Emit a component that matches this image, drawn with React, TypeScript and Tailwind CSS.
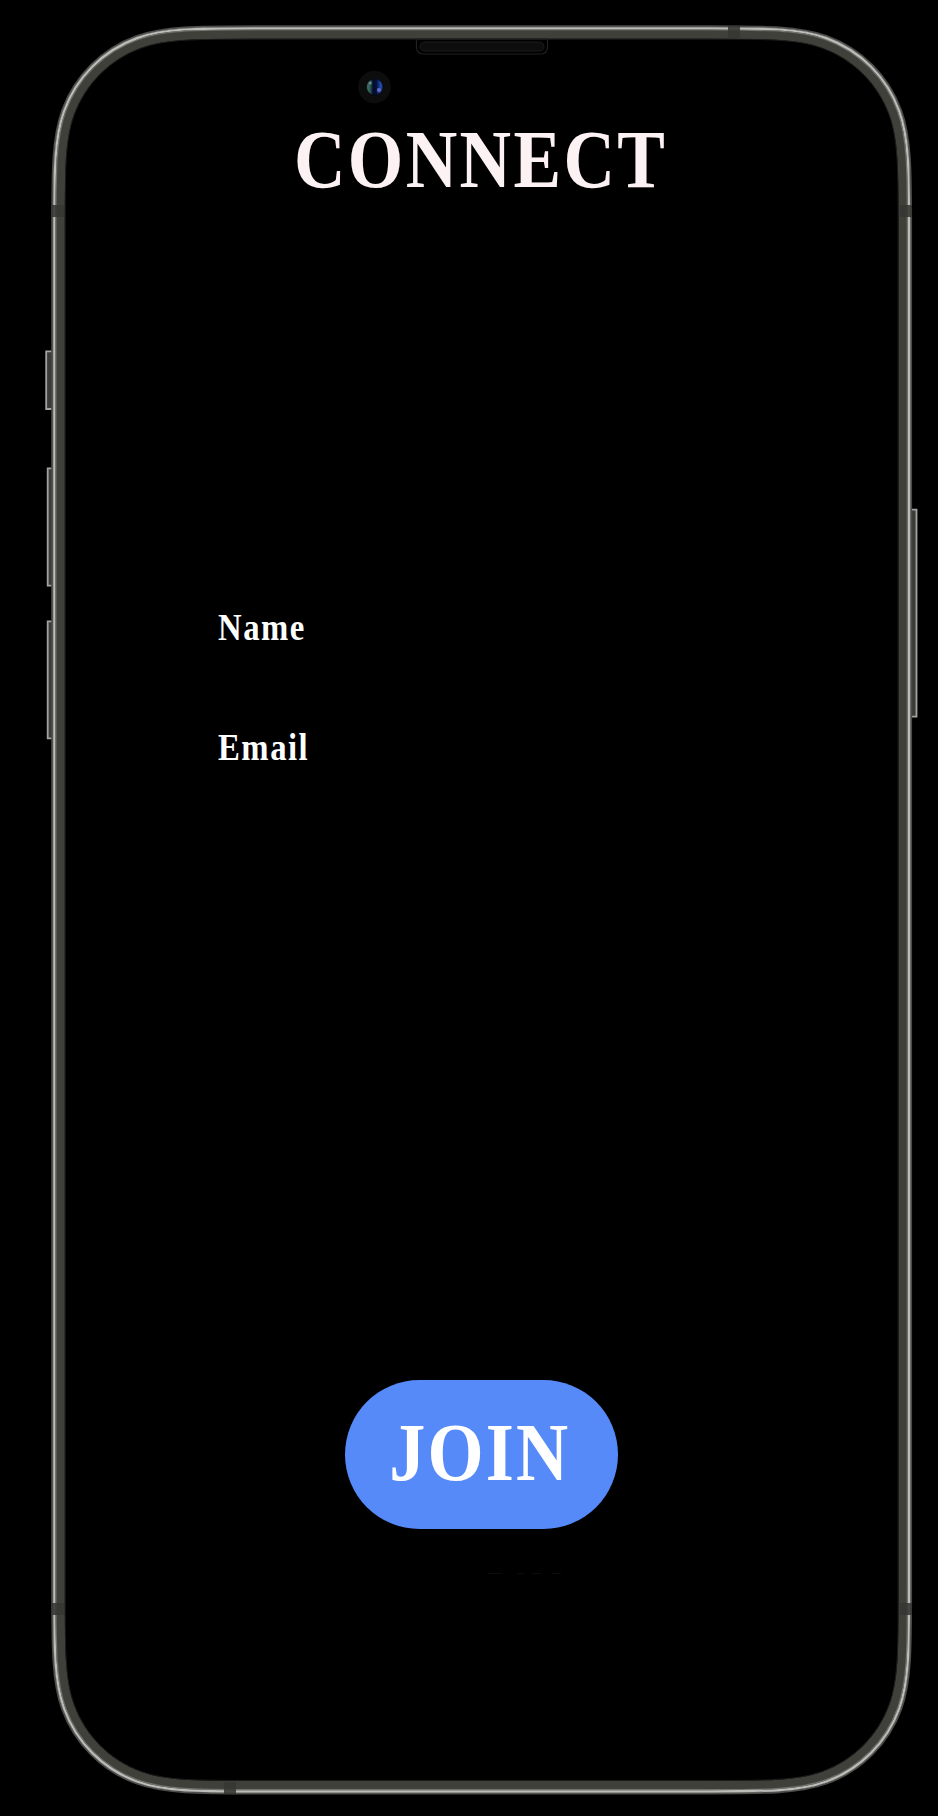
const DX0 = 54.3, DX1 = 909, DY0 = 28.3, DY1 = 1791.3, RADIUS = 131;

// Continuous-curvature rounded rectangle, inset by d from the rim line.
function squircle(d: number): string {
  const l = DX0 + d, r = DX1 - d, t = DY0 + d, b = DY1 - d, k = RADIUS - d;
  const e = 1.5287 * k, c1 = 1.0885 * k, c2 = 0.836 * k, p = 0.6315 * k;
  const q = 0.0749 * k, m = 0.3728 * k, n = 0.1691 * k;
  return [
    `M${l + e} ${t}H${r - e}`,
    `C${r - c1} ${t} ${r - c2} ${t} ${r - p} ${t + q}C${r - m} ${t + n} ${r - n} ${t + m} ${r - q} ${t + p}C${r} ${t + c2} ${r} ${t + c1} ${r} ${t + e}`,
    `V${b - e}C${r} ${b - c1} ${r} ${b - c2} ${r - q} ${b - p}C${r - n} ${b - m} ${r - m} ${b - n} ${r - p} ${b - q}C${r - c2} ${b} ${r - c1} ${b} ${r - e} ${b}`,
    `H${l + e}C${l + c1} ${b} ${l + c2} ${b} ${l + p} ${b - q}C${l + m} ${b - n} ${l + n} ${b - m} ${l + q} ${b - p}C${l} ${b - c2} ${l} ${b - c1} ${l} ${b - e}`,
    `V${t + e}C${l} ${t + c1} ${l} ${t + c2} ${l + q} ${t + p}C${l + n} ${t + m} ${l + m} ${t + n} ${l + p} ${t + q}C${l + c2} ${t} ${l + c1} ${t} ${l + e} ${t}Z`,
  ].join("");
}

function DeviceFrame() {
  return (
    <svg className="pointer-events-none absolute inset-0" width="938" height="1816" viewBox="0 0 938 1816" fill="none" aria-hidden="true">
      <defs>
        <linearGradient id="tint" x1="0" x2="1" y1="0" y2="0">
          <stop offset="0" stopColor="#3f7468" />
          <stop offset="0.2" stopColor="#345f5c" />
          <stop offset="0.4" stopColor="#030c28" />
          <stop offset="0.6" stopColor="#04103a" />
          <stop offset="0.85" stopColor="#1f49ae" />
          <stop offset="1" stopColor="#1c3f9a" />
        </linearGradient>
      </defs>

      {/* side keys */}
      <g fill="#3b3b39" stroke="#a3a3a0" strokeWidth="1.8">
        <path d="M52 351.3H46.2V409H52" />
        <path d="M52 468.3H47.7V585.7H52" />
        <path d="M52 621.3H47.7V738.3H52" />
        <path d="M912 509.7H916.5V716.7H912" />
      </g>

      {/* metal band */}
      <path d={squircle(-2.4)} stroke="#4b4b49" strokeWidth="1.4" />
      <path d={squircle(-1.4)} stroke="#62625f" strokeWidth="1.2" />
      <path d={squircle(6.2)} stroke="#40403b" strokeWidth="8.6" />
      <path d={squircle(10.9)} stroke="#1c1d1d" strokeWidth="1" />
      <path d={squircle(1.7)} stroke="#71716d" strokeWidth="1.2" />
      <path d={squircle(0)} stroke="#bcbcb8" strokeWidth="2.2" />

      {/* antenna lines */}
      <g fill="#363632" fillOpacity="0.88">
        <rect x="51" y="205" width="13" height="12" />
        <rect x="900" y="205" width="12" height="12" />
        <rect x="51" y="1603" width="13" height="12" />
        <rect x="900" y="1603" width="12" height="12" />
        <rect x="728" y="26" width="12" height="12" />
        <rect x="224" y="1782" width="12" height="12" />
      </g>

      {/* speaker */}
      <path d="M415 39H549M416.5 40V47Q416.5 54 423.5 54H540.5Q547.5 54 547.5 47V40" stroke="#202020" strokeWidth="1.2" />
      <rect x="420" y="42" width="124" height="9" rx="4.5" fill="#0d0d0d" stroke="#1d1d1d" />

      {/* front camera */}
      <circle cx="374.5" cy="87" r="16.3" fill="#0d0d0d" />
      <circle cx="374.7" cy="87" r="8.2" fill="url(#tint)" stroke="#05070c" strokeWidth="0.6" />
      <circle cx="370.3" cy="83" r="1.6" fill="#8fb0ab" fillOpacity="0.6" />
      <circle cx="378.8" cy="90" r="2" fill="#8f87d8" fillOpacity="0.65" />

      {/* faint residue under the button */}
      <path d="M488 1573.5H502M517 1573.5H524M532 1573.5H541M552 1573.5H561" stroke="#0c0c0c" />
    </svg>
  );
}

export default function App() {
  return (
    <div className="relative h-[1816px] w-[938px] overflow-hidden bg-black font-['Liberation_Serif',serif] font-bold">
      <DeviceFrame />
      <main className="relative flex h-full flex-col">
        <h1 className="mt-[114px] ml-[294px] h-[92px] w-fit origin-left scale-x-[0.87] text-[82px] leading-[92px] tracking-[2.7px] whitespace-nowrap text-[#fdf2f3]">
          CONNECT
        </h1>
        <div className="mt-[402px] ml-[218px] flex flex-col gap-20 text-[37px] leading-10 text-white">
          <label className="w-fit origin-left scale-x-[0.885] tracking-[1.7px]">Name</label>
          <label className="w-fit origin-left scale-x-[0.885] tracking-[1.7px]">Email</label>
        </div>
        <button className="mt-[612px] ml-[345px] flex h-[149px] w-[273px] items-center justify-center rounded-full bg-[#568af8] pr-1 pb-1 text-[82px] leading-none text-white">
          <span className="block scale-x-[0.88] tracking-[2.4px]">JOIN</span>
        </button>
      </main>
    </div>
  );
}
